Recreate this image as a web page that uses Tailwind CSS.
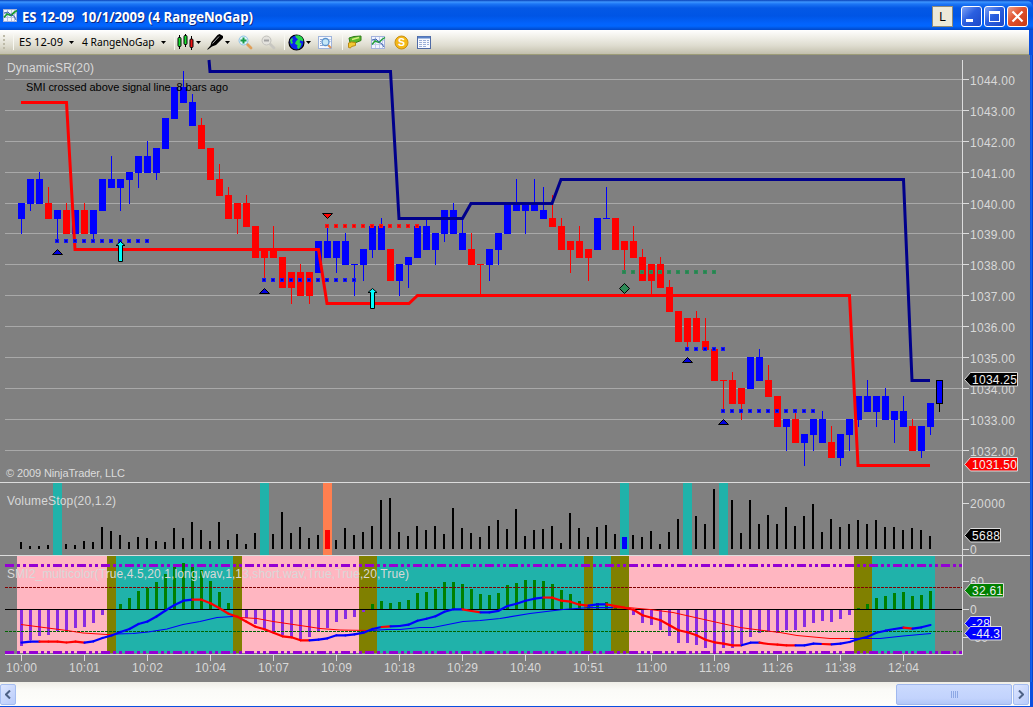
<!DOCTYPE html>
<html lang="en">
<head>
    <meta charset="UTF-8">
    <meta name="viewport" content="width=device-width, initial-scale=1.0">
    <title>ES 12-09 10/1/2009 (4 RangeNoGap)</title>
    <script src="https://cdn.jsdelivr.net/npm/@tailwindcss/browser@4"></script>
</head>
<body class="overflow-hidden bg-[#0a4fe0]">
    <div class="flex h-[707px] w-[1033px] flex-col overflow-hidden" style='font-family: "Liberation Sans", Arial, sans-serif;'>
        <!-- Title bar -->
        <header class="flex h-[30px] shrink-0 items-center rounded-tr-lg bg-[linear-gradient(#0840b8_0px,#3d95ff_2px,#1c75f5_4px,#0458e6_8px,#0055e5_16px,#0262fb_23px,#0166ff_26px,#0148c8_30px)] pr-[5px] pl-[3px]">
            <svg class="mt-0.5 h-[14px] w-[15px] shrink-0" viewBox="0 0 15 14">
                <rect x=".5" y=".5" width="13" height="12" fill="#f2f5ff" stroke="#a9b4d8"/>
                <path d="M4.500 1v11M8.500 1v11M11.500 1v11M1 4.500h12M1 8.500h12" stroke="#b9c3e4"/>
                <path d="M1 8.500l3-3.500 4 1.500 3-3 3-2" fill="none" stroke="#1b9b32" stroke-width="1.800"/>
                <path d="M1 4l4-1 3 3 3 1 2 4" fill="none" stroke="#3c62ad"/>
            </svg>
            <svg class="ml-1 h-[30px] w-[240px] shrink-0" viewBox="22 0 240 30" style='font-family: "Open Sans", "Noto Sans", sans-serif;' font-weight="700" font-size="14">
                <text x="23" y="23" fill="#0a2a86" textLength="231" lengthAdjust="spacingAndGlyphs">ES 12-09&#160; 10/1/2009 (4 RangeNoGap)</text>
                <text x="22" y="22" fill="#fff" textLength="231" lengthAdjust="spacingAndGlyphs">ES 12-09&#160; 10/1/2009 (4 RangeNoGap)</text>
            </svg>
            <div class="ml-auto mt-[3px] flex items-center">
                <button class="mr-2 flex h-[21px] w-[21px] items-center justify-center border border-[#8f8b78] bg-[#ece9d8] text-[12px] text-black">L</button>
                <button class="mr-[2px] size-[21px] rounded-[3px] border border-white bg-[linear-gradient(135deg,#7fa3f5,#2a5fe0_45%,#1c48c8)]">
                    <svg viewBox="0 0 19 19"><path d="M4 12h7v3H4z" fill="#fff"/></svg>
                </button>
                <button class="mr-[2px] size-[21px] rounded-[3px] border border-white bg-[linear-gradient(135deg,#7fa3f5,#2a5fe0_45%,#1c48c8)]">
                    <svg viewBox="0 0 19 19"><path d="M4 4h11v11H4zM5 7v7h9V7z" fill="#fff" fill-rule="evenodd"/></svg>
                </button>
                <button class="size-[21px] rounded-[3px] border border-white bg-[linear-gradient(135deg,#f0a088,#e0502c_45%,#c83a14)]">
                    <svg viewBox="0 0 19 19"><path d="M4.500 4.500l10 10M14.500 4.500l-10 10" stroke="#fff" stroke-width="2.200"/></svg>
                </button>
            </div>
        </header>

        <!-- Toolbar -->
        <nav class="mr-1 flex h-[25px] shrink-0 items-center border-b border-[#9c9c78] bg-[linear-gradient(#fff,#f3f2ec_25%,#dedccf_65%,#c2bfad)] pl-[3px] text-black">
            <svg class="h-4 w-[3px]" viewBox="0 0 3 16"><path d="M0 1h2v2H0zM0 5h2v2H0zM0 9h2v2H0zM0 13h2v2H0z" fill="#bdbaa8"/></svg>
            <div class="ml-[7px] h-4 w-px bg-[#f8f8f2]"></div>
            <svg class="ml-[5px] h-4 w-[44px] overflow-visible" viewBox="0 0 44 16"><text x="0" y="12" font-size="11" textLength="44" lengthAdjust="spacingAndGlyphs" font-family="Noto Sans, sans-serif">ES 12-09</text></svg>
            <svg class="ml-[6px] h-[3px] w-[5px]" viewBox="0 0 5 3"><path d="M0 0h5L2.500 3z"/></svg>
            <svg class="ml-[8px] h-4 w-[73px] overflow-visible" viewBox="0 0 73 16"><text x="0" y="12" font-size="11" textLength="72.500" lengthAdjust="spacingAndGlyphs" font-family="Noto Sans, sans-serif">4 RangeNoGap</text></svg>
            <svg class="ml-[6px] h-[3px] w-[5px]" viewBox="0 0 5 3"><path d="M0 0h5L2.500 3z"/></svg>
            <div class="ml-[8px] h-4 w-px bg-[#f8f8f2]"></div>
            <!-- candle style -->
            <svg class="ml-[2px] h-4 w-[17px]" viewBox="0 0 17 16">
                <path d="M2.500 1v14M8.500 0v13M14.500 2v14" stroke="#000"/>
                <rect x="1" y="3.500" width="3" height="9" rx="1" fill="#17e02f" stroke="#000"/>
                <rect x="7" y="1.500" width="3" height="9" rx="1" fill="#17e02f" stroke="#000"/>
                <rect x="13" y="5" width="3" height="8.500" rx="1" fill="#f01414" stroke="#000"/>
            </svg>
            <svg class="ml-[2px] h-[3px] w-[5px]" viewBox="0 0 5 3"><path d="M0 0h5L2.500 3z"/></svg>
            <!-- pen -->
            <svg class="ml-[6px] h-4 w-[16px]" viewBox="0 0 16 16">
                <path d="M0 15.500l3.500-4 1-3.500 6-7 2-1 3.500 2v2l-7 7-4 1.500-4 3z"/>
                <path d="M5.500 9.500l6.500-7" stroke="#b0b0b0"/>
            </svg>
            <svg class="ml-[2px] h-[3px] w-[5px]" viewBox="0 0 5 3"><path d="M0 0h5L2.500 3z"/></svg>
            <!-- zoom in -->
            <svg class="ml-[8px] size-[15px]" viewBox="0 0 15 15">
                <path d="M9.500 9.500l3.500 3.500" stroke="#e0a05a" stroke-width="2.800" stroke-linecap="round"/>
                <circle cx="5.500" cy="5.500" r="4.500" fill="#ddf4fb" stroke="#8fc3e6"/>
                <path d="M5.500 2.500v6M2.500 5.500h6" stroke="#189a48" stroke-width="2"/>
            </svg>
            <!-- zoom out -->
            <svg class="ml-[8px] size-[15px]" viewBox="0 0 15 15">
                <path d="M9.500 9.500l3.500 3.500" stroke="#c8c7c1" stroke-width="2.800" stroke-linecap="round"/>
                <circle cx="5.500" cy="5.500" r="4.500" fill="#e3e2dd" stroke="#c2c1bc"/>
                <path d="M3 5.500h5" stroke="#a2a2a2" stroke-width="2"/>
            </svg>
            <div class="ml-[8px] h-4 w-px bg-[#f8f8f2]"></div>
            <!-- globe -->
            <svg class="ml-[3px] size-[17px]" viewBox="0 0 17 17">
                <circle cx="8.500" cy="8.500" r="7.500" fill="#0c20f0" stroke="#000" stroke-width="1.200"/>
                <path d="M7 1.500l4-.2 3 2 1.500 3-1 1-2-1-1 2 2 1.500-1 3-2 2.500-1.500-2 .5-2-2.500-1.500 1-2.500 2-2-2-1.500zM2 6l2-2 1 1-1 2 1 2-2 1z" fill="#25d84b"/>
            </svg>
            <svg class="ml-px h-[3px] w-[5px]" viewBox="0 0 5 3"><path d="M0 0h5L2.500 3z"/></svg>
            <!-- data box -->
            <svg class="ml-[7px] size-[15px]" viewBox="0 0 15 15">
                <rect x=".5" y="1.500" width="13" height="12" fill="#f6f9ff" stroke="#9fb4dc"/>
                <path d="M2 4.500h2M2 6.500h1M2 8.500h1M2 10.500h3M11.500 4.500h1M11.500 6.500h1" stroke="#8ea5d2"/>
                <path d="M10 10l3 3" stroke="#d8955b" stroke-width="2"/>
                <circle cx="7.500" cy="7" r="3.500" fill="#c6e8f8" stroke="#5a92cc" stroke-width="1.300"/>
            </svg>
            <div class="ml-[9px] h-4 w-px bg-[#f8f8f2]"></div>
            <!-- orders -->
            <svg class="ml-[4px] h-[14px] w-[15px]" viewBox="0 0 15 14">
                <path d="M2 3l5-1.500 7-.5v4.500l-5 2-6 .5z" fill="#5cb82c" stroke="#2f7f1a"/>
                <path d="M5 4.500l7-2" stroke="#d4f07c" stroke-width="1.500"/>
                <path d="M1.500 8l3-1 4 .5v3l-4 1-1 1.500-2-.5z" fill="#f3c832" stroke="#b98a14"/>
            </svg>
            <!-- indicators -->
            <svg class="ml-[9px] size-[15px]" viewBox="0 0 15 15">
                <rect x=".5" y="1.500" width="13" height="12" fill="#f2f5ff" stroke="#a3b2dc"/>
                <path d="M4.500 2v11M8.500 2v11M11.500 2v11M1 5.500h12M1 9.500h12" stroke="#c4cdeb"/>
                <path d="M1 9.500l3-3.500 4 1.500 3-3 3-2" fill="none" stroke="#23a03a" stroke-width="1.500"/>
                <path d="M1 5l4-1 3 3 3 2 2 3" fill="none" stroke="#3c62ad"/>
            </svg>
            <!-- strategies -->
            <svg class="ml-[8px] size-[15px]" viewBox="0 0 15 15">
                <circle cx="7.500" cy="7.500" r="6.500" fill="#f4b817" stroke="#c98f10"/>
                <text x="7.500" y="11.200" font-size="10.500" font-weight="700" text-anchor="middle" fill="#fff">S</text>
            </svg>
            <!-- properties -->
            <svg class="ml-[8px] h-[13px] w-[14px]" viewBox="0 0 14 13">
                <rect x=".5" y=".5" width="13" height="12" fill="#f8faff" stroke="#4f6ba6"/>
                <path d="M1 1.500h12" stroke="#5b83c7" stroke-width="2"/>
                <path d="M2 4.500h3M2 6.500h3M2 8.500h3M2 10.500h3M6 4.500h3M6 6.500h3M6 8.500h3M6 10.500h3M10 4.500h2M10 6.500h2M10 8.500h2" stroke="#9cb0d8"/>
            </svg>
        </nav>

        <!-- Chart panels, drawn by the script below -->
        <main class="flex h-[627px] shrink-0 bg-[#808080]">
            <svg id="chart" class="h-[627px] w-[1030px] shrink-0" viewBox="0 55 1030 627" font-size="12"></svg>
            <div class="w-[3px] bg-[linear-gradient(90deg,#0c50dc,#1464f0,#0434b4)]"></div>
        </main>

        <!-- Scrollbar -->
        <footer class="mr-[3px] flex h-[24px] shrink-0 items-center bg-[linear-gradient(#efeee7,#fbfbf8_35%,#fefefb)]">
            <button class="flex h-[21px] w-[16px] items-center justify-center rounded-[2px] border border-[#a5bdf0] bg-[linear-gradient(135deg,#dde6ff,#b8cbfa)]">
                <svg class="h-[9px] w-[6px]" viewBox="0 0 6 9"><path d="M5 .5l-4 4 4 4" fill="none" stroke="#4d6185" stroke-width="2"/></svg>
            </button>
            <div class="ml-auto flex h-[21px] w-[116px] items-center justify-center gap-px rounded-[2px] border border-[#a0b8ee] bg-[linear-gradient(#cbdafe,#c2d3fd_70%,#b4c7f6)]">
                <i class="h-[7px] w-px bg-[#8da8e4]"></i><i class="h-[7px] w-px bg-[#8da8e4]"></i><i class="h-[7px] w-px bg-[#8da8e4]"></i><i class="h-[7px] w-px bg-[#8da8e4]"></i>
            </div>
            <button class="mr-px ml-px flex h-[21px] w-[16px] items-center justify-center rounded-[2px] border border-[#a5bdf0] bg-[linear-gradient(135deg,#dde6ff,#b8cbfa)]">
                <svg class="h-[9px] w-[6px]" viewBox="0 0 6 9"><path d="M1 .5l4 4-4 4" fill="none" stroke="#4d6185" stroke-width="2"/></svg>
            </button>
        </footer>
    </div>

    <script>
    const chart = document.getElementById('chart');
    let out = '';

    const rect = (x, y, w, h, fill, extra = '') => {
        out += `<rect x="${x}" y="${y}" width="${w}" height="${h}" fill="${fill}" shape-rendering="crispEdges" ${extra}/>`;
    };
    const line = (points, stroke, width, extra = '') => {
        out += `<polyline points="${points}" fill="none" stroke="${stroke}" stroke-width="${width}" ${extra}/>`;
    };
    const text = (x, y, str, len, fill = '#d8d8d8', extra = '') => {
        out += `<text x="${x}" y="${y}" fill="${fill}" textLength="${len}" ${extra}>${str}</text>`;
    };

    const LIGHT = '#dcdcdc';
    const TEAL = '#20b2aa';
    const PINK = '#ffb6c1';
    const OLIVE = '#808000';
    const barX = i => 21 + 9 * i;
    // k = quarter points below 1044.00
    const priceY = k => Math.round(79 + 7.72 * k);

    // ---- Price panel ----
    for (let p = 0; p <= 12; p++) {
        const y = priceY(p * 4);
        rect(5, y, 957, 1, '#a9a9a9');
        rect(962, y, 7, 1, LIGHT);
        text(970, y + 6, (1044 - p).toFixed(2), 45);
    }

    // high, body top, body bottom, low, colour
    const candles = `16 16 18 20 b|13 13 16 17 b|12 13 16 16 b|14 16 18 18 r|17 17 18 21 b|16 17 20 20 r|17 17 20 20 b|16 17 20 20 r|17 17 20 21 b|13 13 17 17 b
10 13 14 14 b|13 13 14 17 b|12 12 13 16 b|10 10 12 14 b|8 10 12 12 b|9 9 12 13 b|5 5 9 9 b|1 1 5 5 b|-1 1 3 3 b|2 3 6 6 b
5 6 9 9 r|9 9 13 13 r|11 13 15 15 r|14 15 18 18 r|16 16 18 20 r|15 16 19 19 r|19 19 23 23 r|22 22 23 26 r|19 22 23 23 r|23 23 27 27 r
25 25 27 29 r|24 25 28 28 r|25 25 28 29 r|21 21 25 25 b|19 21 23 23 b|21 21 23 25 b|20 21 24 24 b|24 24 24 28 b|22 22 24 26 b|19 19 22 23 b
18 19 22 22 b|22 22 26 26 r|24 24 26 28 b|23 23 24 27 b|19 19 23 23 b|18 19 22 22 b|20 20 22 24 b|17 17 20 21 b|16 17 20 20 b|18 20 22 22 b
20 22 24 24 r|24 24 24 28 r|22 22 24 26 b|20 20 22 24 b|16 16 20 20 b|13 16 17 17 b|16 16 17 20 b|13 16 17 17 b|14 17 18 18 b|15 18 19 19 r
18 19 22 22 r|21 21 22 25 r|19 21 23 23 r|22 22 23 26 r|18 18 22 22 b|14 18 18 18 b|18 18 22 22 r|21 21 22 25 r|19 21 23 23 r|22 23 26 26 r
24 24 26 28 r|23 24 27 27 r|26 27 30 30 r|30 30 34 34 r|31 31 34 35 r|30 31 34 34 r|31 34 35 35 r|35 35 39 39 r|39 39 39 43 r|38 39 42 42 r
40 40 42 44 r|36 36 40 40 b|35 36 39 39 b|37 39 41 41 r|41 41 45 45 r|44 44 45 48 b|43 44 47 47 r|46 46 47 50 b|44 44 46 48 b|43 44 47 47 b
45 47 49 49 r|46 46 49 50 b|44 44 46 48 b|41 41 44 45 b|39 41 43 43 b|41 41 43 45 b|40 41 44 44 b|43 43 44 47 b|41 43 45 45 b|44 45 48 48 r
45 45 48 49 b|42 42 45 46 b|39 39 42 43 b`.split(/[|\n]/).map(s => s.trim().split(' '));

    candles.forEach(([hi, top, bottom, lo, c], i) => {
        const last = i === candles.length - 1;
        const fill = c === 'b' ? '#0000ff' : '#ff0000';
        const y = priceY(+top);
        rect(barX(i), priceY(+hi), 1, priceY(+lo) - priceY(+hi) + 1, last ? '#000' : fill);
        if (last) rect(barX(i) - 3, y, 7, priceY(+bottom) - y + 1, '#000');
        rect(barX(i) - (last ? 2 : 3), y + (last ? 1 : 0), last ? 5 : 7, priceY(+bottom) - y + (last ? -1 : 1), fill);
    });

    line('209,60 210,71.5 390.5,71.5 399,218.5 462.5,218.5 471,203.5 552,203.5 561,179.5 903.5,179.5 912,380.5 930,380.5', '#00008b', 3);
    line('21,102.5 66.5,102.5 75,249.5 318.5,249.5 327,303.5 409,303.5 417.5,295.5 849.5,295.5 858,465.5 930,465.5', '#ff0000', 3);

    // stop level dots: first bar, last bar, y, outer, inner
    [[4, 14, 239, '#1414ff', '#0000c0'], [27, 37, 278, '#1414ff', '#0000c0'], [34, 44, 224, '#ff1414', '#e00808'],
     [67, 77, 270, '#2e8b57', '#2a8050'], [74, 78, 347, '#1414ff', '#0000c0'], [78, 88, 409, '#1414ff', '#0000c0']]
        .forEach(([from, to, y, outer, inner]) => {
            for (let i = from; i <= to; i++) {
                rect(19 + 9 * i, y, 4, 4, outer);
                rect(20 + 9 * i, y + 1, 2, 2, inner);
            }
        });

    // signal markers
    [[57.5, 249], [264.5, 288], [687.5, 357], [723.5, 419]].forEach(([x, y]) => {
        out += `<path d="M${x} ${y + .5}l5 5h-10z" fill="#0000e0" stroke="#000"/>`;
    });
    out += '<path d="M322.5 213.5h10l-5 5z" fill="#ff0000" stroke="#000"/>';
    out += '<path d="M624.5 283.5l5 5-5 5-5-5z" fill="#2e8b57" stroke="#000"/>';
    [[120.5, 241], [372.5, 288]].forEach(([x, y]) => {
        out += `<path d="M${x} ${y + .5}l4.500 4h-2.500v16h-4v-16h-2.500z" fill="#00ffff" stroke="#000"/>`;
    });

    text(7, 72, 'DynamicSR(20)', 87);
    text(26, 91, 'SMI crossed above signal line&#160; 8 bars ago', 202, '#000', 'font-size="11"');
    text(6, 477, '© 2009 NinjaTrader, LLC', 119, LIGHT, 'font-size="11"');

    // ---- Volume panel ----
    [4, 27, 67, 74, 78].forEach(i => rect(17 + 9 * i, 483, 9, 72, TEAL));
    rect(17 + 9 * 34, 483, 9, 72, '#ff7f50');
    const volumeTop = [542,546,546,545,0,544,545,541,542,527,531,535,542,537,538,541,542,528,538,522,530,541,522,540,534,544,533,0,534,512,533,527,538,535,0,540,528,535,532,526,500,498,532,536,526,530,526,534,508,528,533,537,526,520,529,509,536,530,529,526,543,513,528,537,527,525,534,0,535,537,531,544,532,519,0,516,524,489,0,500,533,500,524,515,524,507,526,516,504,532,519,527,524,520,524,520,527,527,530,528,530,536];
    volumeTop.forEach((y, i) => { if (y) rect(20 + 9 * i, y, 2, 549 - y, '#000'); });
    rect(325, 530, 5, 19, '#ff0000');
    rect(622, 537, 5, 12, '#0000ff');
    text(7, 505, 'VolumeStop(20,1.2)', 109);

    // ---- SMI panel ----
    [[17, 107, PINK], [107, 116, OLIVE], [116, 233, TEAL], [233, 242, OLIVE], [242, 359, PINK], [359, 377, OLIVE], [377, 584, TEAL],
     [584, 593, OLIVE], [593, 611, TEAL], [611, 629, OLIVE], [629, 854, PINK], [854, 872, OLIVE], [872, 935, TEAL]]
        .forEach(([a, b, fill]) => rect(a, 556, b - a, 97, fill));

    const smiBars = [646,640,636,635,631,631,628,627,623,615,610,604,598,591,588,582,574,566,563,565,570,581,592,603,609,618,624,629,632,635,637,639,637,632,628,622,619,617,612,604,601,603,602,600,593,592,589,582,582,584,589,594,595,593,585,583,580,580,581,584,590,594,601,605,603,602,606,610,615,623,625,630,636,643,643,645,648,653,648,648,644,637,633,632,633,630,630,627,623,621,622,619,615,608,604,598,596,593,592,596,595,591];
    smiBars.forEach((y, i) => rect(20 + 9 * i, Math.min(y, 609), 3, Math.abs(y - 609), y > 609 ? '#8a2be2' : '#008000'));

    line('5,587.5 962,587.5', '#800000', 1, 'stroke-dasharray="3 1"');
    line('5,631.5 962,631.5', '#006400', 1, 'stroke-dasharray="3 1"');
    rect(5, 609, 957, 1, '#000');
    [565.5, 652.5].forEach(y => line(`5,${y} 962,${y}`, '#9400d3', 3, 'stroke-dasharray="9 3 3 3 3 3"'));

    // signal line
    line('21,624.5 40,627 67,630.5 83,633 107,634.5 116,634.5', '#ff0000', 1);
    line('116,634 133,633.5 148,632 167,629 183,624.5 200,621.5 217,617.5 233,616.5', '#0000ff', 1.2);
    line('233,616.5 240,617.5 257,618.5 273,621.5 307,626.5 320,628.5 340,630 370,630.5', '#ff0000', 1);
    line('370,630.5 387,629.5 400,629.5 420,627.5 433,627.5 463,621.5 480,620.5 500,618.5 530,613.5 563,609.5 590,607.5 613,607.7', '#0000ff', 1.2);
    line('613,607.7 630,607.7 650,609.5 673,612.5 713,621.5 740,627.5 759,630 780,632.5 797,635.5 830,638.5 850,638.5', '#ff0000', 1);
    line('850,638.5 880,638.5 903,636 931,633.5', '#0000ff', 1.2);

    // SMI line, coloured by direction
    const smi = [642.7,641.7,641.7,641.7,641.7,642.5,641.7,642.7,641.3,638,635.5,632,629,624,621.5,616.5,610.5,605,600.7,599.7,599.7,603.3,608.3,613.7,616.7,621.7,626.7,629.3,632.7,636.3,637.3,640.3,640.3,639.7,638.3,635.3,635.3,634.3,632.7,629,627,626.3,626,624.7,620.7,618.7,616.3,611.7,609.3,609.3,611,612.3,612.3,610.8,606,603.7,600.7,598.7,597.5,597.7,600.7,601.7,604.7,605.7,604.3,604.3,606,607.7,609.7,615.3,617.7,620.3,625.3,630.3,632.3,635.3,639.7,642.3,643.7,645.3,645.3,642.7,642.7,644,644.7,645.3,645.3,645.3,643.7,644,644.3,643.7,642,639,636.7,632.7,630.7,629,627.7,628.7,627.3,625];
    const redRuns = [[3, 7], [20, 32], [41, 41], [50, 51], [59, 63], [66, 80], [83, 86], [90, 90], [99, 99]];
    for (let i = 1; i < smi.length; i++) {
        const red = redRuns.some(([a, b]) => i >= a && i <= b);
        line(`${barX(i - 1) + .5},${smi[i - 1]} ${barX(i) + .5},${smi[i]}`, red ? '#ff0000' : '#0000ff', 2.2, 'stroke-linecap="round"');
    }
    text(7, 578, 'SMI2_multicolor(True,4.5,20,1,long.wav,1,13,short.wav,True,True,20,True)', 402);

    // ---- Axes ----
    rect(0, 482, 1030, 1, LIGHT);
    rect(0, 555, 1030, 1, LIGHT);
    rect(5, 654, 958, 1, LIGHT);
    rect(962, 60, 1, 595, LIGHT);
    [[503, '20000', 35], [549, '0', 7], [581, '60', 14], [609, '0', 7], [637, '-60', 18]].forEach(([y, label, len]) => {
        rect(962, y, 7, 1, LIGHT);
        text(970, y + 5, label, len);
    });
    ['10:00', '10:01', '10:02', '10:04', '10:07', '10:09', '10:18', '10:29', '10:40', '10:51', '11:00', '11:09', '11:26', '11:38', '12:04'].forEach((t, j) => {
        rect(21 + 63 * j, 655, 1, 6, LIGHT);
        text(6 + 63 * j, 672, t, 31);
    });

    // price tags: top, right edge, label, length, fill
    [[372, 1017.5, '1034.25', 45, '#000000'], [457, 1017.5, '1031.50', 45, '#ff0000'], [528, 1000.5, '5688', 28, '#000000'],
     [583, 1003.5, '32.61', 31, '#008000'], [616, 990.5, '-28', 18, '#0000ff'], [626, 1001.5, '-44.3', 28, '#0000ff']]
        .forEach(([y, right, label, len, fill]) => {
            out += `<path d="M964.5 ${y + 7.5}L970.5 ${y + .5}H${right}V${y + 14}H970.5z" fill="${fill}" stroke="${LIGHT}"/>`;
            text(972, y + 12, label, len, '#f0f0f0');
        });

    chart.innerHTML = out;
    </script>
</body>
</html>
